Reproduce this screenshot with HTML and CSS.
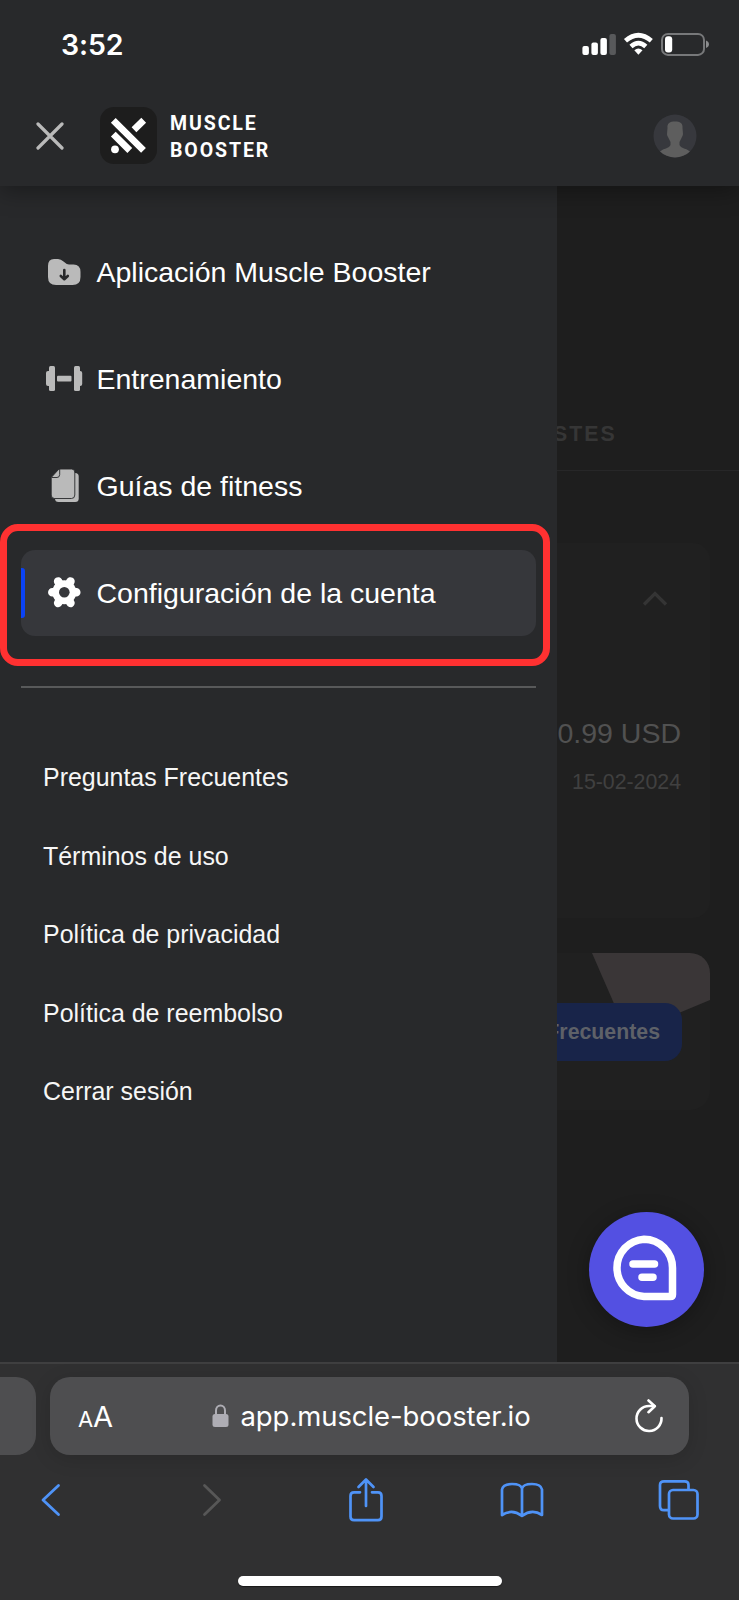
FILE: index.html
```html
<!DOCTYPE html>
<html lang="es">
<head>
<meta charset="utf-8">
<title>Muscle Booster</title>
<link rel="stylesheet" href="styles.css">
</head>
<body>
<div class="phone">
  <header class="header">
    <div class="status">
      <span class="clock">3:52</span>
      <svg class="status-icons" width="128" height="24" viewBox="582 32 128 24">
        <g fill="#fff"><rect x="582.4" y="46" width="6.500" height="9" rx="2"/><rect x="591.4" y="42.600" width="6.500" height="12.400" rx="2"/><rect x="600.4" y="38" width="6.500" height="17" rx="2"/></g>
        <rect x="609.4" y="34" width="6.500" height="21" rx="2" fill="#58595b"/>
        <g fill="none" stroke="#fff" stroke-width="4.700"><path d="M625.500 40.800Q638.400 29.800 651.300 40.800"/><path d="M631 46.400Q638.400 39.800 645.800 46.400"/></g>
        <path d="M634.300 50.300Q638.400 46.700 642.500 50.300L638.400 54.800Z" fill="#fff"/>
        <rect x="662" y="33.900" width="42" height="21" rx="6" fill="none" stroke="#77787a" stroke-width="2"/>
        <rect x="665" y="36.300" width="7.200" height="16.200" rx="3" fill="#fff"/>
        <path d="M706 40.500c4 1.500 4 6 0 7.500z" fill="#8b8c8e"/>
      </svg>
    </div>
    <div class="brandbar">
      <svg class="close" width="28" height="28" viewBox="0 0 28 28"><path d="M2 2L26 26M26 2L2 26" stroke="#bababa" stroke-width="3.200" stroke-linecap="round"/></svg>
      <svg class="logo" width="57" height="57" viewBox="0 0 57 57">
        <rect width="57" height="57" rx="14" fill="#1d1d1d"/>
        <g stroke="#fff" stroke-width="6.800" fill="none"><path d="M13.300 13.300L43.500 43.300M13.300 27.200L29.800 43.500M43.700 13.300L34 22.800"/></g>
        <circle cx="15" cy="42.300" r="3.900" fill="#fff"/>
      </svg>
      <div class="brand">MUSCLE<br>BOOSTER</div>
      <svg class="avatar" width="44" height="44" viewBox="0 0 44 44">
        <defs><clipPath id="round"><circle cx="22" cy="22" r="21.500"/></clipPath></defs>
        <circle cx="22" cy="22" r="21.500" fill="#37383d"/>
        <path clip-path="url(#round)" fill="#5e5e5e" d="M14.500 14C14 9 17 7.500 22 7.500S30 9 29.500 14L30 20C29.800 22 29 22.500 28.500 24L26.500 28V31C28 35 35 34 38 39V44H6V39C9 34 16 35 17.500 31V28L15.500 24C15 22.500 14 22 14 20Z"/>
      </svg>
    </div>
  </header>

  <main class="stage">
    <nav class="drawer">
      <div class="menu">
        <a class="item">
          <svg class="icon" width="38" height="38" viewBox="45 253 38 38"><path fill="#bababa" d="M54 259h4q3 0 5.500 2.600T69 264.500H73.500q7 0 7 7.500v5q0 8-8 8H56q-8 0-8-8V266q0-7 6-7Z"/><path d="M64.300 270v8M60.800 276l3.500 3.200 3.500-3.200" stroke="#28292b" stroke-width="2.600" fill="none" stroke-linecap="round" stroke-linejoin="round"/></svg>
          <span>Aplicación Muscle Booster</span>
        </a>
        <a class="item">
          <svg class="icon" width="38" height="38" viewBox="45 360 38 38"><g fill="#bababa"><rect x="49" y="366" width="6" height="25" rx="1.500"/><rect x="46" y="371" width="6" height="15" rx="2"/><rect x="57" y="375.800" width="14.500" height="5.700" rx="1"/><rect x="74" y="366" width="6" height="25" rx="1.500"/><rect x="76.500" y="371" width="5.700" height="15" rx="2"/></g></svg>
          <span>Entrenamiento</span>
        </a>
        <a class="item">
          <svg class="icon" width="38" height="38" viewBox="45 467 38 38"><rect x="55" y="473" width="23.700" height="29" rx="3.500" fill="#bababa"/><path fill="#bababa" stroke="#28292b" stroke-width=".9" d="M59 469H71.500q3.300 0 3.300 3v23q0 3.500-3.300 3.500H54.500q-3.300 0-3.300-3.500V477.500Z"/><path fill="none" stroke="#28292b" stroke-width=".9" d="M51.500 477.500H57q2.700 0 2.700-3V469"/></svg>
          <span>Guías de fitness</span>
        </a>
        <a class="item item-active">
          <svg class="icon" width="38" height="38" viewBox="45 573 38 38">
            <circle cx="64.300" cy="591.200" r="12" fill="#fff"/>
            <path d="M52.300 591.200H76.300M58.100 580.400L70.500 602M70.500 580.400L58.100 602" stroke="#fff" stroke-width="8.500" stroke-linecap="round"/>
            <circle cx="64.300" cy="591.200" r="5.300" fill="#36373b"/>
          </svg>
          <span>Configuración de la cuenta</span>
          <i class="highlight"></i>
        </a>
      </div>
      <div class="divider"></div>
      <div class="links">
        <a>Preguntas Frecuentes</a>
        <a>Términos de uso</a>
        <a>Política de privacidad</a>
        <a>Política de reembolso</a>
        <a>Cerrar sesión</a>
      </div>
    </nav>
    <section class="page">
      <div class="tab">STES</div>
      <div class="card plan">
        <svg class="chevron" width="26" height="17" viewBox="0 0 26 17"><path d="M2 14.500L13 3.500L24 14.500" fill="none" stroke="#343434" stroke-width="3.300"/></svg>
        <div class="price">0.99 USD</div>
        <div class="date">15-02-2024</div>
      </div>
      <div class="card help">
        <svg class="shape" width="118" height="62" viewBox="0 0 118 62"><path d="M0 0H118V47L82 62H27Z" fill="#3a3637"/></svg>
        <div class="faq">Frecuentes</div>
      </div>
      <div class="chat">
        <svg width="66" height="66" viewBox="0 0 66 66" fill="none" stroke="#fff"><path d="M33 4.200A28.700 28.700 0 0 0 33 61.500H59.500Q61.500 61.500 61.500 59.500V33A28.500 28.800 0 0 0 33 4.200Z" stroke-width="7.500"/><path d="M22 29H43.500M31 42.200H42" stroke-width="7.500" stroke-linecap="round"/></svg>
      </div>
    </section>
  </main>

  <footer class="browser">
    <div class="address-row">
      <div class="previous-tab"></div>
      <div class="address">
        <span class="reader"><small>A</small>A</span>
        <span class="url">
          <svg width="17" height="24" viewBox="0 0 17 24"><path d="M4 11V6.500a4.500 5 0 0 1 9 0V11" fill="none" stroke="#aeadb4" stroke-width="2"/><rect x=".5" y="10" width="16" height="13" rx="2.500" fill="#aeadb4"/></svg>
          <span class="domain">app.muscle-booster.io</span>
        </span>
        <svg class="reload" width="30" height="34" viewBox="0 0 30 34" fill="none" stroke="#fff" stroke-width="2.600" stroke-linecap="round" stroke-linejoin="round"><path d="M20.500 7H15A12.500 12.500 0 1 0 27.500 19M14.500 .8"/><path d="M14.500 1.500L20.800 7.200L14.500 13.200"/></svg>
      </div>
    </div>
    <div class="toolbar">
      <svg class="back" width="20" height="34" viewBox="0 0 20 34"><path d="M17.500 2.500L2 17L17.500 31.500" fill="none" stroke="#4f93f7" stroke-width="2.800" stroke-linecap="round" stroke-linejoin="round"/></svg>
      <svg class="forward" width="20" height="34" viewBox="0 0 20 34"><path d="M2.500 2.500L17.500 17L2.500 31.500" fill="none" stroke="#575757" stroke-width="2.800" stroke-linecap="round" stroke-linejoin="round"/></svg>
      <svg class="share" width="36" height="46" viewBox="0 0 36 46" fill="none" stroke="#4f93f7" stroke-width="2.700" stroke-linecap="round" stroke-linejoin="round"><path d="M12 15.300H6Q2.500 15.300 2.500 19V39.500Q2.500 43.200 6 43.200H30Q33.500 43.200 33.500 39.500V19Q33.500 15.300 30 15.300H24M18 29V3M10.500 10L18 2.500L25.500 10"/></svg>
      <svg class="book" width="44" height="36" viewBox="0 0 44 36" fill="none" stroke="#4f93f7" stroke-width="2.700" stroke-linejoin="round"><path d="M22 6.500V34Q12 26.500 2 33V7.500Q3 2 12 2T22 6.500Q23 2 32 2T42 7.500V33Q32 26.500 22 34"/></svg>
      <svg class="tabs" width="42" height="42" viewBox="0 0 42 42" fill="none" stroke="#4f93f7" stroke-width="2.700"><path d="M10.500 31.200H6Q2 31.200 2 27V6Q2 2.300 6 2.300H26.500Q30.500 2.300 30.500 6V10.500"/><rect x="11" y="11" width="28.500" height="28.500" rx="4"/></svg>
    </div>
    <div class="home"></div>
  </footer>
</div>
</body>
</html>
```
FILE: styles.css
```css
* { box-sizing: border-box; }
body { margin: 0; background: #1e1e1e; font-family: "Liberation Sans", Arial, sans-serif; color: #fff; }
svg { display: block; flex: none; }
.phone { width: 739px; height: 1600px; display: flex; flex-direction: column; overflow: hidden; }

.header { height: 186px; flex: none; background: #28292b; position: relative; z-index: 2; box-shadow: 0 5px 22px rgba(0, 0, 0, .35); }
.status { display: flex; justify-content: space-between; padding: 32px 29px 0 61px; height: 107px; }
.clock { font: 600 28.500px/26px Inter, sans-serif; letter-spacing: -.1px; }
.brandbar { display: flex; align-items: center; padding-left: 36px; height: 57px; }
.logo { margin-left: 36px; }
.brand { margin-left: 13px; padding-top: 5px; font: 700 19.500px/26.600px Roboto, sans-serif; letter-spacing: 1.900px; }
.avatar { margin-left: auto; margin-right: 42px; }

.stage { height: 1176px; flex: none; display: flex; }
.drawer { width: 557px; flex: none; background: #28292b; padding: 43px 21px 0; }
.menu { display: flex; flex-direction: column; gap: 21px; }
.item { height: 86px; border-radius: 14px; display: flex; align-items: center; gap: 13.500px; padding-left: 24px; font-size: 28.500px; line-height: 34px; position: relative; white-space: nowrap; }
.item-active { background: #36373b; }
.item-active::before { content: ""; position: absolute; left: 0; top: 18px; width: 4px; height: 50px; border-radius: 0 3px 3px 0; background: #0b43f5; }
.highlight { position: absolute; left: -21px; top: -26px; width: 550px; height: 142px; border: 7px solid #ff3131; border-radius: 18px; }
.divider { height: 2px; margin-top: 50px; background: #58595a; }
.links { padding: 50px 22px 0; display: flex; flex-direction: column; }
.links a { height: 78.500px; line-height: 78.500px; font-size: 24.950px; color: #f6f6f6; }

.page { width: 182px; flex: none; background: #1e1e1e; overflow: hidden; position: relative; }
.tab { height: 285px; border-bottom: 1px solid #272728; display: flex; align-items: flex-end; padding: 0 0 23px 0; margin-left: -4px; color: #363636; font-weight: 700; font-size: 21.300px; line-height: 26px; letter-spacing: 2px; }
.card { width: 153px; background: #202020; display: flex; flex-direction: column; align-items: flex-end; overflow: hidden; }
.plan { margin-top: 72px; height: 375px; border-radius: 0 17px 17px 0; padding: 47px 29px 0 0; }
.chevron { margin-right: 13px; }
.price { margin-top: 109px; color: #515151; font-size: 28.500px; line-height: 34px; white-space: nowrap; }
.date { margin-top: 19px; color: #404040; font-size: 21.300px; line-height: 26px; }
.help { margin-top: 35px; height: 157px; border-radius: 0 20px 20px 0; }
.faq { margin: -12px 28px 0 0; width: 125px; height: 58px; position: relative; border-radius: 0 17px 17px 0; background: #182449; color: #5e6168; font-weight: 700; font-size: 21.300px; line-height: 59px; display: flex; justify-content: flex-end; padding-right: 22px; }
.chat { width: 115px; height: 115px; margin: 102px 0 0 32px; border-radius: 50%; background: #5350e2; box-shadow: 0 4px 22px rgba(0, 0, 0, .3); display: flex; justify-content: center; align-items: center; padding: 0 5px 3px 0; }

.browser { height: 238px; flex: none; background: #303031; border-top: 2px solid #3f3f40; position: relative; z-index: 2; }
.address-row { display: flex; gap: 14px; padding-top: 13px; }
.previous-tab { width: 36px; height: 78px; background: #4e4e50; border-radius: 0 20px 20px 0; }
.address { width: 639px; height: 78px; border-radius: 20px; background: #4e4e50; box-shadow: 0 4px 20px rgba(0, 0, 0, .14); display: flex; align-items: center; padding: 0 25px 0 28px; }
.reader { font: 400 29px/34px Inter, sans-serif; letter-spacing: -.2px; width: 60px; padding-top: 3px; white-space: nowrap; }
.reader small { font-size: 22px; }
.url { display: flex; align-items: center; gap: 11.500px; margin-left: 74px; }
.domain { font: 400 27.500px/34px Inter, sans-serif; letter-spacing: -.08px; }
.reload { margin-left: auto; }
.toolbar { display: flex; align-items: center; height: 90px; padding-left: 41px; }
.forward { margin-left: 141px; }
.share { margin-left: 126px; }
.book { margin-left: 116px; }
.tabs { margin-left: 114px; }
.home { width: 264px; height: 10px; border-radius: 5px; background: #fff; margin: 31px auto 0; box-shadow: 0 1px 1px rgba(0, 0, 0, .5); }
```
